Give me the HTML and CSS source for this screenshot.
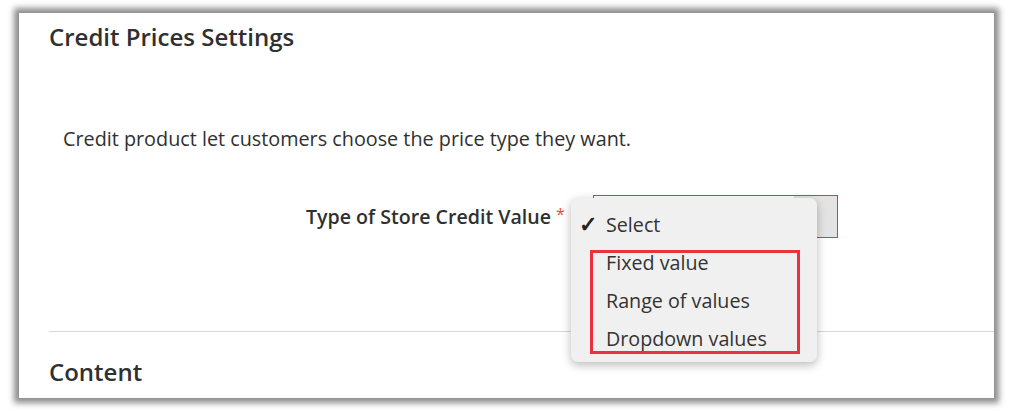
FILE: index.html
```html
<!DOCTYPE html>
<html>
<head>
<meta charset="utf-8">
<link rel="stylesheet" href="styles.css">
</head>
<body>
<div class="frame">
  <h2 class="section-title">Credit Prices Settings</h2>
  <p class="note">Credit product let customers choose the price type they want.</p>
  <div class="field">
    <label class="field-label">Type of Store Credit Value</label>
    <span class="required">*</span>
    <div class="control">
      <div class="select-box"></div>
      <ul class="menu">
        <li class="menu-item checked"><span class="check">✓</span>Select</li>
        <li class="menu-item">Fixed value</li>
        <li class="menu-item">Range of values</li>
        <li class="menu-item">Dropdown values</li>
      </ul>
      <div class="highlight"></div>
    </div>
  </div>
  <hr class="divider">
  <h2 class="section-title second">Content</h2>
</div>
</body>
</html>
```
FILE: styles.css
```css
html, body { margin: 0; padding: 0; background: #fff; }
body { font-family: "Open Sans", "Noto Sans", sans-serif; color: #303030; padding-bottom: 13px; }
.frame {
  margin: 13px 19px 0 19px;
  width: 975px;
  height: 385px;
  background: #fff;
  box-shadow: 0 0 6px 5px rgba(0,0,0,0.45);
  box-sizing: border-box;
  padding: 8px 0 0 30px;
  overflow: hidden;
}
.section-title {
  margin: 0;
  font-size: 24px;
  font-weight: 600;
  line-height: 32px;
  color: #303030;
}
.note {
  margin: 73px 0 0 14px;
  font-size: 19.8px;
  line-height: 26px;
}
.field {
  display: flex;
  align-items: center;
  margin-top: 43px;
  height: 43px;
}
.field-label {
  box-sizing: border-box;
  width: 502px;
  text-align: right;
  font-size: 19.6px;
  font-weight: 600;
}
.required {
  display: inline-block;
  width: 42px;
  box-sizing: border-box;
  padding-left: 5px;
  color: #eb4d2a;
  font-size: 16px;
  margin-bottom: 6px;
}
.control {
  position: relative;
  width: 245px;
  height: 43px;
}
.select-box {
  box-sizing: border-box;
  width: 245px;
  height: 43px;
  border: 1px solid #1a7fdc;
  background: linear-gradient(to right, #fff 0, #fff 200px, #e3e3e3 200px);
}
.menu {
  position: absolute;
  left: -22px;
  top: 3px;
  width: 246px;
  margin: 0;
  padding: 8px 0 4px;
  list-style: none;
  background: #f0f0f0;
  border-radius: 7px;
  box-shadow: 0 3px 10px rgba(0,0,0,0.28);
  font-size: 19.7px;
  color: #333;
}
.menu-item {
  height: 38px;
  line-height: 38px;
  padding-left: 35px;
  position: relative;
}
.check {
  position: absolute;
  left: 8px;
  top: -2px;
  font-weight: 700;
  font-size: 22px;
  color: #222;
}
.highlight {
  position: absolute;
  left: -3px;
  top: 55px;
  width: 210px;
  height: 104px;
  box-sizing: border-box;
  border: 3px solid #e8333a;
}
.divider {
  margin: 93px 0 0 0;
  border: 0;
  border-top: 1px solid #d6d6d6;
}
.section-title.second {
  margin-top: 24px;
}
```
